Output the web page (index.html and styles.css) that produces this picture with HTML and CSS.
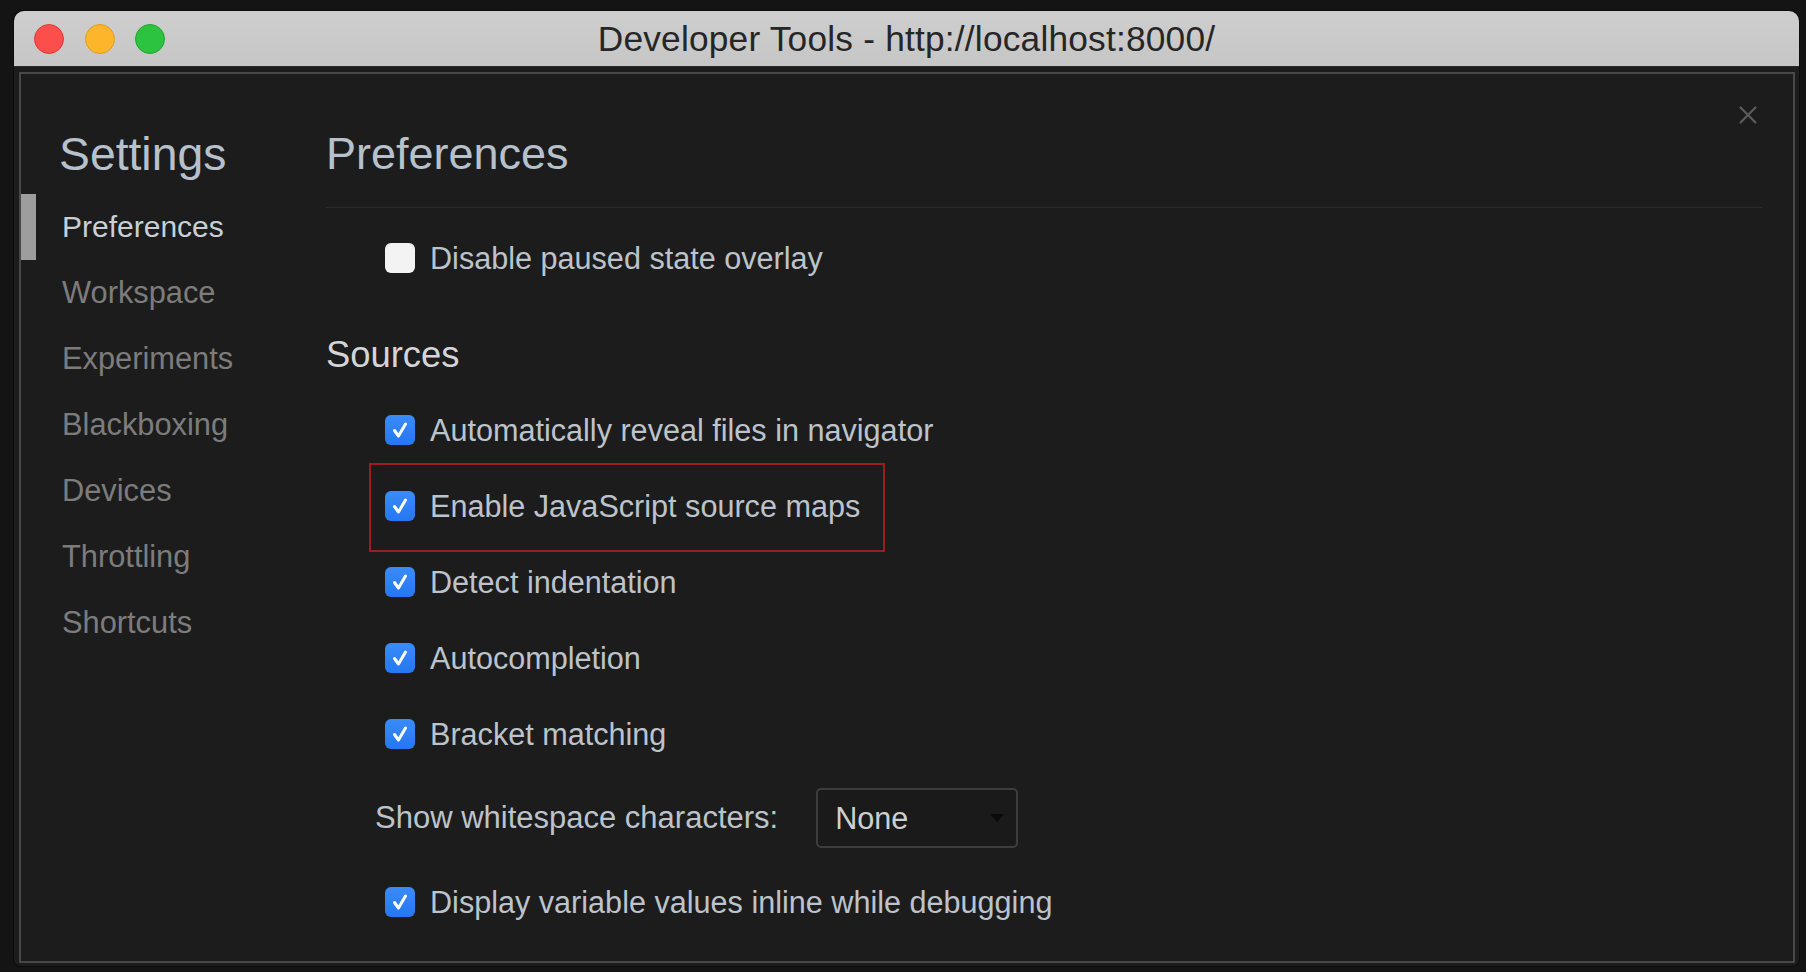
FILE: index.html
```html
<!DOCTYPE html>
<html lang="en">
<head>
<meta charset="utf-8">
<title>Developer Tools - http://localhost:8000/</title>
<link rel="stylesheet" href="styles.css">
</head>
<body>
<div class="window">
  <div class="titlebar">
    <div class="lights">
      <span class="light red"></span>
      <span class="light yellow"></span>
      <span class="light green"></span>
    </div>
    <div class="title">Developer Tools - http://localhost:8000/</div>
    <div class="spacer"></div>
  </div>
  <div class="body">
    <div class="panel">
      <button class="close" aria-label="Close">
        <svg width="20" height="20" viewBox="0 0 20 20"><path d="M2.5 2.5 L17.5 17.5 M17.5 2.5 L2.5 17.5" stroke="#5c5c5c" stroke-width="2.2" stroke-linecap="round" fill="none"/></svg>
      </button>
      <aside class="sidebar">
        <h1 class="side-title">Settings</h1>
        <ul class="nav">
          <li class="nav-item active">Preferences</li>
          <li class="nav-item">Workspace</li>
          <li class="nav-item">Experiments</li>
          <li class="nav-item">Blackboxing</li>
          <li class="nav-item">Devices</li>
          <li class="nav-item">Throttling</li>
          <li class="nav-item">Shortcuts</li>
        </ul>
      </aside>
      <main class="main">
        <h2 class="main-title">Preferences</h2>
        <div class="options first">
          <label class="option"><span class="box"></span><span class="label">Disable paused state overlay</span></label>
        </div>
        <h3 class="section">Sources</h3>
        <div class="options">
          <label class="option"><span class="box checked"><svg width="30" height="30" viewBox="0 0 30 30"><path d="M9.5 15.5 L13.5 21 L20.5 9" stroke="#fff" stroke-width="3" stroke-linecap="round" stroke-linejoin="round" fill="none"/></svg></span><span class="label">Automatically reveal files in navigator</span></label>
          <label class="option highlighted"><span class="box checked"><svg width="30" height="30" viewBox="0 0 30 30"><path d="M9.5 15.5 L13.5 21 L20.5 9" stroke="#fff" stroke-width="3" stroke-linecap="round" stroke-linejoin="round" fill="none"/></svg></span><span class="label">Enable JavaScript source maps</span><span class="highlight"></span></label>
          <label class="option"><span class="box checked"><svg width="30" height="30" viewBox="0 0 30 30"><path d="M9.5 15.5 L13.5 21 L20.5 9" stroke="#fff" stroke-width="3" stroke-linecap="round" stroke-linejoin="round" fill="none"/></svg></span><span class="label">Detect indentation</span></label>
          <label class="option"><span class="box checked"><svg width="30" height="30" viewBox="0 0 30 30"><path d="M9.5 15.5 L13.5 21 L20.5 9" stroke="#fff" stroke-width="3" stroke-linecap="round" stroke-linejoin="round" fill="none"/></svg></span><span class="label">Autocompletion</span></label>
          <label class="option"><span class="box checked"><svg width="30" height="30" viewBox="0 0 30 30"><path d="M9.5 15.5 L13.5 21 L20.5 9" stroke="#fff" stroke-width="3" stroke-linecap="round" stroke-linejoin="round" fill="none"/></svg></span><span class="label">Bracket matching</span></label>
          <div class="select-row">
            <span class="label select-label">Show whitespace characters:</span>
            <div class="select"><span class="select-value">None</span><span class="caret"></span></div>
          </div>
          <label class="option"><span class="box checked"><svg width="30" height="30" viewBox="0 0 30 30"><path d="M9.5 15.5 L13.5 21 L20.5 9" stroke="#fff" stroke-width="3" stroke-linecap="round" stroke-linejoin="round" fill="none"/></svg></span><span class="label">Display variable values inline while debugging</span></label>
        </div>
      </main>
    </div>
  </div>
</div>
</body>
</html>
```
FILE: styles.css
```css
* { box-sizing: border-box; }

html, body {
  margin: 0;
  padding: 0;
  background: #141414;
  font-family: "Liberation Sans", Arial, sans-serif;
}

body {
  width: 1806px;
  height: 972px;
  overflow: hidden;
  padding: 11px 0 0 14px;
}

.window {
  width: 1785px;
  height: 955px;
  display: flex;
  flex-direction: column;
  border-radius: 10px 10px 7px 7px;
  overflow: hidden;
  background: #1c1c1c;
  box-shadow: 0 0 0 1px #0c0c0c;
}

.titlebar {
  height: 56px;
  flex: 0 0 56px;
  display: grid;
  grid-template-columns: 1fr auto 1fr;
  align-items: center;
  background: linear-gradient(#cecece, #c6c6c6);
  border-bottom: 1px solid #2a2a2a;
}

.lights {
  display: flex;
  gap: 20.5px;
  padding-left: 20px;
}

.light {
  width: 30px;
  height: 30px;
  border-radius: 50%;
  display: block;
}
.light.red { background: #fc4f4c; border: 1px solid #de3a37; }
.light.yellow { background: #fdb52b; border: 1px solid #dd9c22; }
.light.green { background: #2cc43f; border: 1px solid #22a332; }

.title {
  font-size: 35.3px;
  color: #262626;
  white-space: nowrap;
  letter-spacing: 0.2px;
}

.body {
  flex: 1;
  padding: 5px 4px 3px 5px;
  display: flex;
}

.panel {
  position: relative;
  flex: 1;
  border: 2px solid #484848;
  background: #1c1c1c;
  display: grid;
  grid-template-columns: 305px 1fr;
}

.close {
  position: absolute;
  top: 31px;
  right: 35px;
  width: 20px;
  height: 20px;
  padding: 0;
  border: 0;
  background: none;
  display: block;
}
.close svg { display: block; }

.sidebar {
  display: flex;
  flex-direction: column;
}

.side-title {
  margin: 53px 0 13px 0;
  padding-left: 38px;
  height: 54px;
  line-height: 54px;
  font-size: 46.3px;
  font-weight: normal;
  color: #b7c1cc;
}

.nav {
  list-style: none;
  margin: 0;
  padding: 0;
}

.nav-item {
  height: 66px;
  line-height: 66px;
  font-size: 30.8px;
  color: #7c7c7c;
  border-left: 15px solid transparent;
  padding-left: 26px;
}

.nav-item.active {
  border-left-color: #9d9d9d;
  color: #c8cfd6;
  font-size: 30px;
}

.main {
  padding-right: 31px;
  display: flex;
  flex-direction: column;
}

.main-title {
  margin: 53px 0 0 0;
  box-sizing: content-box;
  height: 54px;
  line-height: 54px;
  padding-bottom: 26px;
  font-size: 45px;
  font-weight: normal;
  color: #b7c1cc;
  border-bottom: 1px solid #292929;
}

.options {
  display: flex;
  flex-direction: column;
}

.options.first {
  margin-top: 12px;
}

.option {
  position: relative;
  height: 76px;
  display: flex;
  align-items: center;
  padding-left: 59px;
  gap: 15px;
}

.box {
  width: 30px;
  height: 30px;
  border-radius: 6px;
  background: #f3f3f3;
  display: block;
  flex: 0 0 30px;
}

.box.checked {
  background: linear-gradient(#3a8bfa, #2577f3);
}

.box svg { display: block; }

.label {
  font-size: 30.6px;
  line-height: 36px;
  color: #bcc3cb;
  white-space: nowrap;
}

.select-label {
  font-size: 31px;
}

.section {
  margin: 39px 0 17px 0;
  height: 40px;
  line-height: 40px;
  font-size: 36.4px;
  font-weight: normal;
  color: #d3d5d8;
}

.highlight {
  position: absolute;
  left: 43px;
  top: -5px;
  width: 516px;
  height: 89px;
  border: 2px solid #9a1d1f;
  pointer-events: none;
}

.select-row {
  height: 92px;
  display: flex;
  align-items: center;
  padding-left: 49px;
  gap: 38px;
}

.select {
  width: 202px;
  height: 60px;
  border: 2px solid #3d3d3d;
  border-radius: 5px;
  background: #1a1a1a;
  display: flex;
  align-items: center;
  justify-content: space-between;
  padding: 0 12px 0 17px;
}

.select-value {
  font-size: 30.6px;
  color: #cfcfcf;
}

.caret {
  width: 0;
  height: 0;
  border-left: 7px solid transparent;
  border-right: 7px solid transparent;
  border-top: 8px solid #0b0b0b;
  margin-top: -1px;
}
```
